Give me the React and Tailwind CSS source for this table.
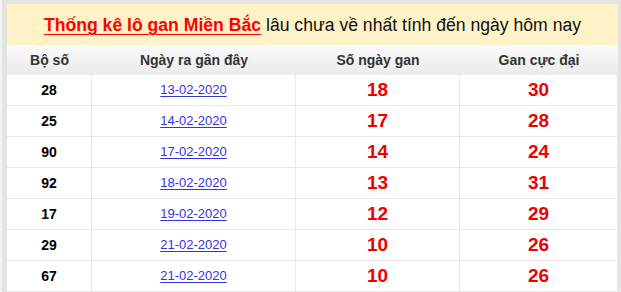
const rows = [
  { so: '28', ngay: '13-02-2020', gan: '18', max: '30' },
  { so: '25', ngay: '14-02-2020', gan: '17', max: '28' },
  { so: '90', ngay: '17-02-2020', gan: '14', max: '24' },
  { so: '92', ngay: '18-02-2020', gan: '13', max: '31' },
  { so: '17', ngay: '19-02-2020', gan: '12', max: '29' },
  { so: '29', ngay: '21-02-2020', gan: '10', max: '26' },
  { so: '67', ngay: '21-02-2020', gan: '10', max: '26' },
]

const cols = 'grid grid-cols-[85px_204px_164px_158px]'
const cell = 'flex items-center justify-center border-r border-b border-[#e8e8e8]'

export default function App() {
  return (
    <div className="flex w-[621px] h-[292px] overflow-hidden bg-[#e3e3e3] font-['Liberation_Sans',Arial,sans-serif]">
      <div className="w-[2px] bg-[#f3f3f3]" />
      <div className="ml-[5px] mt-[4px] w-[611px] bg-white">
        {/* tiêu đề */}
        <div className="h-[41px] flex items-center justify-center bg-[#fff2c6] text-[17.6px] pt-[1px]">
          <a className="text-[#ff0000] font-bold underline underline-offset-[3px] decoration-[1px]">Thống kê lô gan Miền Bắc</a>
          <span className="text-[#111] ml-[5px]">lâu chưa về nhất tính đến ngày hôm nay</span>
        </div>

        {/* header bảng */}
        <div className={`${cols} h-[30px] bg-gradient-to-b from-[#fbfbfb] to-[#ebebeb] text-[14px] font-bold text-[#333]`}>
          <div className="flex items-center justify-center">Bộ số</div>
          <div className="flex items-center justify-center">Ngày ra gần đây</div>
          <div className="flex items-center justify-center">Số ngày gan</div>
          <div className="flex items-center justify-center">Gan cực đại</div>
        </div>

        {rows.map((r, i) => (
          <div key={i} className={`${cols} h-[31px]`}>
            <div className={`${cell} text-[14px] font-bold text-black`}>{r.so}</div>
            <div className={cell}>
              <a className="text-[13px] text-[#3434e6] underline underline-offset-[2px]">{r.ngay}</a>
            </div>
            <div className={`${cell} text-[19px] font-bold text-[#ee0000]`}>{r.gan}</div>
            <div className={`${cell} text-[19px] font-bold text-[#ee0000]`}>{r.max}</div>
          </div>
        ))}
      </div>
    </div>
  )
}
